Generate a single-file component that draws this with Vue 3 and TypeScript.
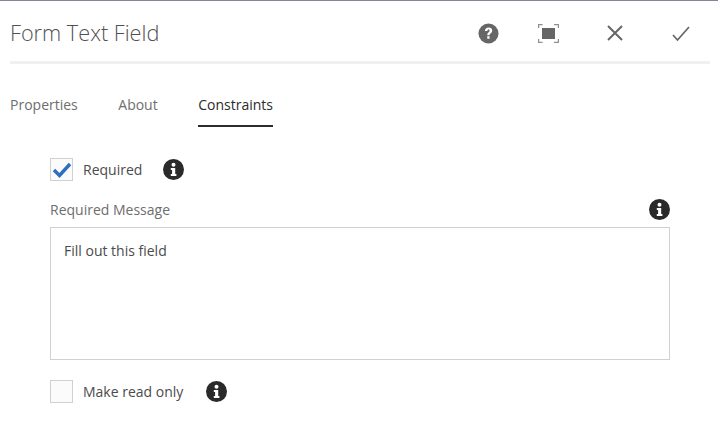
<script setup lang="ts">
const tabs = [
  { label: 'Properties', active: false },
  { label: 'About', active: false },
  { label: 'Constraints', active: true },
]
</script>

<template>
  <div class="dialog">
    <header class="head">
      <h1 class="title">Form Text Field</h1>
      <div class="actions">
        <button class="act">
          <svg width="21" height="21" viewBox="0 0 22 22">
            <circle cx="11" cy="11" r="10.500" fill="#666" />
            <path d="M7.200 8.400c0-2.300 1.700-3.600 3.900-3.600s3.800 1.200 3.800 3.200c0 2.700-2.900 2.800-2.900 4.800H9.700c0-3 2.400-3.100 2.400-4.700 0-.7-.4-1.200-1.100-1.200-.8 0-1.100.6-1.200 1.500z" fill="#fff" />
            <rect x="9.700" y="13.900" width="2.400" height="2.600" fill="#fff" />
          </svg>
        </button>
        <button class="act">
          <svg width="21" height="19" viewBox="0 0 21 19">
            <path d="M.6 4V.6h4M16 .6h4.400V4M20.400 15v3.400H16M4.600 18.400H.6V15" fill="none" stroke="#8a9490" stroke-width="1.200" />
            <rect x="4" y="4" width="13" height="11" fill="#666" />
          </svg>
        </button>
        <button class="act shift">
          <svg width="16" height="16" viewBox="0 0 16 16">
            <path d="M1 1l14 14M15 1L1 15" fill="none" stroke="#666" stroke-width="2" />
          </svg>
        </button>
        <button class="act shift">
          <svg width="18" height="15" viewBox="0 0 18 15">
            <path d="M1 9l4.500 5L17 1" fill="none" stroke="#666" stroke-width="1.700" />
          </svg>
        </button>
      </div>
    </header>

    <nav class="tabs">
      <span v-for="t in tabs" :key="t.label" class="tab" :class="{ active: t.active }">{{ t.label }}</span>
    </nav>

    <section class="form">
      <div class="check-row first">
        <span class="box">
          <svg width="20" height="17" viewBox="0 0 20 17">
            <path d="M2 9l5.500 5.500L18 3" fill="none" stroke="#2f6fc0" stroke-width="3.400" />
          </svg>
        </span>
        <span class="check-label">Required</span>
        <svg class="info" width="21" height="21" viewBox="0 0 21 21">
          <circle cx="10.500" cy="10.500" r="10.500" fill="#2a2a2a" />
          <circle cx="10.500" cy="5.800" r="2" fill="#fff" />
          <path d="M7.800 9h4.400v6h1.200v2H7.800v-2h1.300v-4H7.800z" fill="#fff" />
        </svg>
      </div>

      <div class="msg-head">
        <span class="msg-label">Required Message</span>
        <svg class="info" width="21" height="21" viewBox="0 0 21 21">
          <circle cx="10.500" cy="10.500" r="10.500" fill="#2a2a2a" />
          <circle cx="10.500" cy="5.800" r="2" fill="#fff" />
          <path d="M7.800 9h4.400v6h1.200v2H7.800v-2h1.300v-4H7.800z" fill="#fff" />
        </svg>
      </div>
      <div class="area">Fill out this field</div>

      <div class="check-row last">
        <span class="box"></span>
        <span class="check-label">Make read only</span>
        <svg class="info gap2" width="21" height="21" viewBox="0 0 21 21">
          <circle cx="10.500" cy="10.500" r="10.500" fill="#2a2a2a" />
          <circle cx="10.500" cy="5.800" r="2" fill="#fff" />
          <path d="M7.800 9h4.400v6h1.200v2H7.800v-2h1.300v-4H7.800z" fill="#fff" />
        </svg>
      </div>
    </section>
  </div>
</template>

<style scoped>
.dialog {
  width: 718px;
  height: 435px;
  box-sizing: border-box;
  border-top: 1px solid #85859a;
  background: #fff;
  font-family: "Open Sans", "Noto Sans", sans-serif;
  font-size: 14px;
  color: #4b4b4b;
  overflow: hidden;
}
.head {
  margin: 0 8px 0 10px;
  height: 60px;
  border-bottom: 3px solid #f0f0f0;
  display: flex;
  align-items: center;
  justify-content: space-between;
}
.title {
  margin: 3px 0 0;
  font-size: 21.700px;
  font-weight: 300;
  color: #505050;
}
.actions {
  display: flex;
  align-items: center;
  margin: 4px -1px 0 0;
}
.act {
  width: 60px;
  height: 40px;
  padding: 0;
  border: 0;
  background: none;
  display: flex;
  align-items: center;
  justify-content: center;
}
.act.shift {
  margin-left: 6.500px;
}
.tabs {
  display: flex;
  gap: 40.500px;
  margin: 26px 0 0 10px;
}
.tab {
  height: 37px;
  line-height: 30px;
  color: #6e6e6e;
  box-sizing: border-box;
}
.tab.active {
  color: #2c2c2c;
  border-bottom: 2px solid #2c2c2c;
}
.form {
  margin: 0 48px 0 50px;
  display: flex;
  flex-direction: column;
}
.check-row {
  display: flex;
  align-items: center;
}
.check-row.first {
  margin-top: 31px;
}
.check-row.last {
  margin-top: 20px;
}
.box {
  width: 23px;
  height: 23px;
  box-sizing: border-box;
  border: 1px solid #d0d0d0;
  background: #fbfbfb;
  display: flex;
  align-items: center;
  justify-content: center;
}
.check-label {
  margin-left: 10px;
  color: #4b4b4b;
}
.info {
  margin-left: 21px;
  flex: none;
}
.gap2 {
  margin-left: 23px;
}
.msg-head {
  margin-top: 16px;
  display: flex;
  align-items: center;
  justify-content: space-between;
  height: 24px;
}
.msg-label {
  color: #6e6e6e;
}
.area {
  margin-top: 6px;
  height: 133px;
  box-sizing: border-box;
  border: 1px solid #d0d0d0;
  padding: 13px 13px;
  color: #4b4b4b;
}
</style>
